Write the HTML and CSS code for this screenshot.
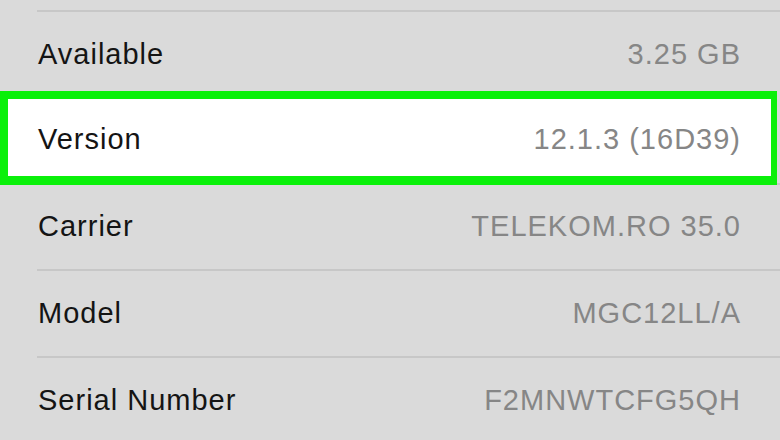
FILE: index.html
```html
<!DOCTYPE html>
<html lang="en">
<head>
    <meta charset="UTF-8">
    <meta name="viewport" content="width=device-width, initial-scale=1.0">
    <title>About</title>
    <link rel="stylesheet" href="styles.css">
</head>
<body>
    <section class="list">
        <div class="row">
            <span class="label">Available</span>
            <span class="value">3.25 GB</span>
        </div>
        <div class="row highlight">
            <span class="label">Version</span>
            <span class="value">12.1.3 (16D39)</span>
        </div>
        <div class="row">
            <span class="label">Carrier</span>
            <span class="value">TELEKOM.RO 35.0</span>
        </div>
        <div class="row">
            <span class="label">Model</span>
            <span class="value">MGC12LL/A</span>
        </div>
        <div class="row">
            <span class="label">Serial Number</span>
            <span class="value">F2MNWTCFG5QH</span>
        </div>
    </section>
</body>
</html>
```

FILE: styles.css
```css
body {
    margin: 0;
    padding: 0;
    background: #dadada;
    font-family: "Liberation Sans", Arial, sans-serif;
    overflow: hidden;
}

.list {
    padding-top: 10px;
}

.row {
    box-sizing: border-box;
    height: 86.6px;
    margin-left: 37px;
    padding: 0 39px 0 1px;
    border-top: 2px solid #c7c7c7;
    display: flex;
    align-items: center;
    justify-content: space-between;
    font-size: 29px;
    letter-spacing: 1px;
}

.label {
    color: #141414;
}

.value {
    color: #868686;
}

.row.highlight {
    position: relative;
    z-index: 1;
    height: 94px;
    margin: -6px 3px -2px 0;
    padding: 4px 30px 0 30px;
    background: #fff;
    border: 8px solid #0af00a;
    border-right-width: 6px;
    border-bottom-width: 9px;
}
```
